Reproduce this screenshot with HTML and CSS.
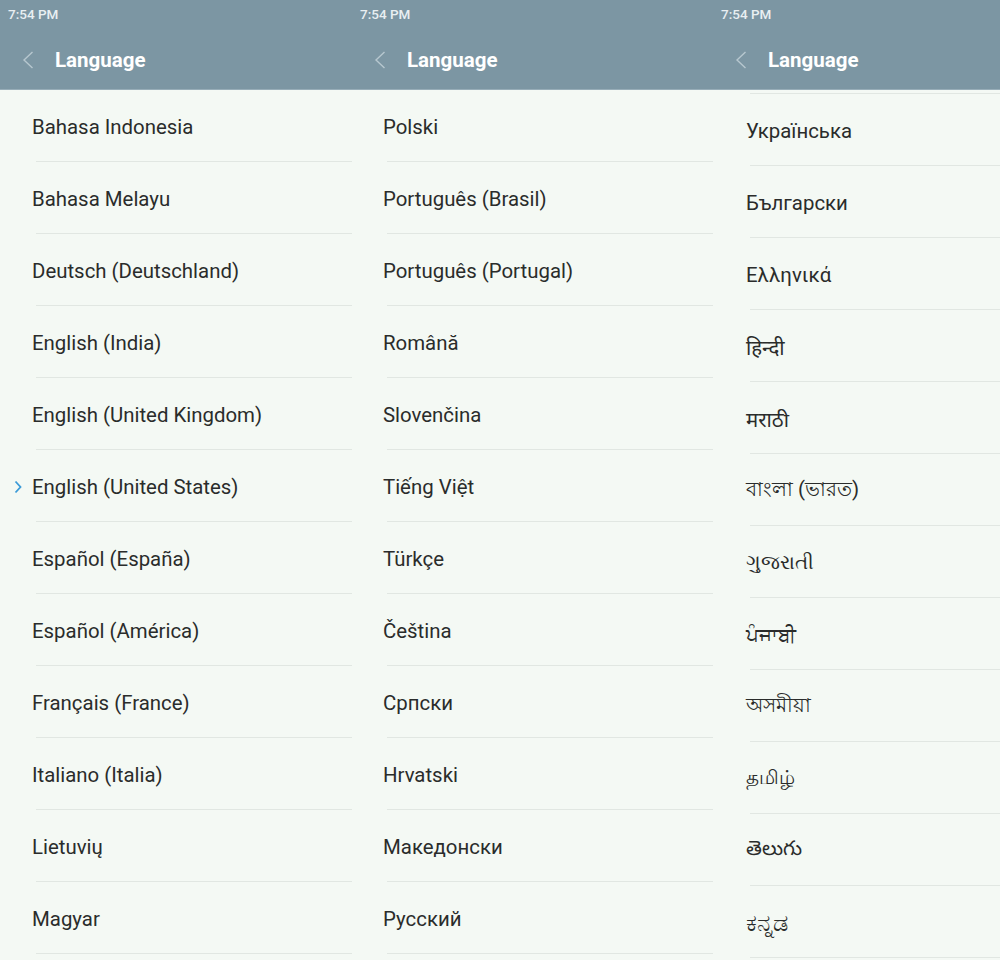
FILE: index.html
```html
<!DOCTYPE html>
<html lang="en">
<head>
<meta charset="utf-8">
<title>Language</title>
<link rel="stylesheet" href="styles.css">
</head>
<body>
<div class="screens">
  <section class="screen s1">
    <header class="topbar">
      <div class="status">7:54 PM</div>
      <div class="nav">
        <svg class="back" width="12" height="18" viewBox="0 0 12 18"><polyline points="10.5,1 2,9 10.5,17" fill="none" stroke="#b7c7cf" stroke-width="1.4"/></svg>
        <h1 class="title">Language</h1>
      </div>
    </header>
    <ul class="list">
      <li class="item"><span class="label">Bahasa Indonesia</span></li>
      <li class="item"><span class="label">Bahasa Melayu</span></li>
      <li class="item"><span class="label">Deutsch (Deutschland)</span></li>
      <li class="item"><span class="label">English (India)</span></li>
      <li class="item"><span class="label">English (United Kingdom)</span></li>
      <li class="item selected"><svg class="check" width="8" height="14" viewBox="0 0 8 14"><polyline points="1.5,1.5 6.5,7 1.5,12.5" fill="none" stroke="#3b9bd8" stroke-width="1.8"/></svg><span class="label">English (United States)</span></li>
      <li class="item"><span class="label">Español (España)</span></li>
      <li class="item"><span class="label">Español (América)</span></li>
      <li class="item"><span class="label">Français (France)</span></li>
      <li class="item"><span class="label">Italiano (Italia)</span></li>
      <li class="item"><span class="label">Lietuvių</span></li>
      <li class="item"><span class="label">Magyar</span></li>
    </ul>
  </section>
  <section class="screen s2">
    <header class="topbar">
      <div class="status">7:54 PM</div>
      <div class="nav">
        <svg class="back" width="12" height="18" viewBox="0 0 12 18"><polyline points="10.5,1 2,9 10.5,17" fill="none" stroke="#b7c7cf" stroke-width="1.4"/></svg>
        <h1 class="title">Language</h1>
      </div>
    </header>
    <ul class="list">
      <li class="item"><span class="label">Polski</span></li>
      <li class="item"><span class="label">Português (Brasil)</span></li>
      <li class="item"><span class="label">Português (Portugal)</span></li>
      <li class="item"><span class="label">Română</span></li>
      <li class="item"><span class="label">Slovenčina</span></li>
      <li class="item"><span class="label">Tiếng Việt</span></li>
      <li class="item"><span class="label">Türkçe</span></li>
      <li class="item"><span class="label">Čeština</span></li>
      <li class="item"><span class="label">Српски</span></li>
      <li class="item"><span class="label">Hrvatski</span></li>
      <li class="item"><span class="label">Македонски</span></li>
      <li class="item"><span class="label">Русский</span></li>
    </ul>
  </section>
  <section class="screen s3">
    <header class="topbar">
      <div class="status">7:54 PM</div>
      <div class="nav">
        <svg class="back" width="12" height="18" viewBox="0 0 12 18"><polyline points="10.5,1 2,9 10.5,17" fill="none" stroke="#b7c7cf" stroke-width="1.4"/></svg>
        <h1 class="title">Language</h1>
      </div>
    </header>
    <ul class="list">
      <li class="item scrolled-edge"></li>
      <li class="item"><span class="label">Українська</span></li>
      <li class="item"><span class="label">Български</span></li>
      <li class="item"><span class="label">Ελληνικά</span></li>
      <li class="item"><span class="label" lang="hi">हिन्दी</span></li>
      <li class="item"><span class="label" lang="mr">मराठी</span></li>
      <li class="item"><span class="label" lang="bn">বাংলা (ভারত)</span></li>
      <li class="item"><span class="label" lang="gu">ગુજરાતી</span></li>
      <li class="item"><span class="label" lang="pa">ਪੰਜਾਬੀ</span></li>
      <li class="item"><span class="label" lang="as">অসমীয়া</span></li>
      <li class="item"><span class="label" lang="ta">தமிழ்</span></li>
      <li class="item"><span class="label" lang="te">తెలుగు</span></li>
      <li class="item"><span class="label" lang="kn">ಕನ್ನಡ</span></li>
    </ul>
  </section>
</div>
</body>
</html>
```

FILE: styles.css
```css
* { box-sizing: border-box; }
html, body { margin: 0; padding: 0; }
body {
  width: 1000px;
  height: 960px;
  overflow: hidden;
  background: #f4f9f4;
  font-family: Roboto, "Noto Sans", "Liberation Sans", sans-serif;
}
.screens {
  display: flex;
  width: 1000px;
  height: 960px;
  overflow: hidden;
}
.screen {
  display: flex;
  flex-direction: column;
  flex: none;
  height: 960px;
  overflow: hidden;
  background: #f4f9f4;
}
.s1 { width: 352px; }
.s2 { width: 361px; }
.s3 { width: 287px; }

.topbar {
  flex: none;
  height: 90px;
  background: #7c96a3;
  border-bottom: 1px solid #97adb8;
}
.status {
  height: 29px;
  padding-left: 8px;
  line-height: 29px;
  font-size: 13.5px;
  font-weight: 500;
  color: #e9eff2;
}
.nav {
  display: flex;
  align-items: center;
  height: 60px;
  padding-left: 22px;
  padding-top: 2px;
}
.back { flex: none; }
.title {
  margin: 0 0 0 21px;
  font-size: 20.5px;
  font-weight: 700;
  color: #ffffff;
}

.list {
  list-style: none;
  margin: 0;
  padding: 0;
}
.item {
  position: relative;
  display: flex;
  align-items: center;
  height: 72px;
  margin-left: 36px;
  padding-top: 2px;
  border-bottom: 1px solid #e1e7e2;
}
.s2 .item { margin-left: 35px; }
.s3 .item { margin-left: 37px; }
.item.scrolled-edge { height: 4px; padding-top: 0; }
.label {
  margin-left: -4px;
  font-size: 20.4px;
  color: #2a2c2b;
  white-space: nowrap;
}
.label:lang(kn) { font-size: 24px; }
.label:lang(gu) { font-size: 19.5px; }
.check {
  position: absolute;
  left: -22px;
  top: 30px;
}
```
